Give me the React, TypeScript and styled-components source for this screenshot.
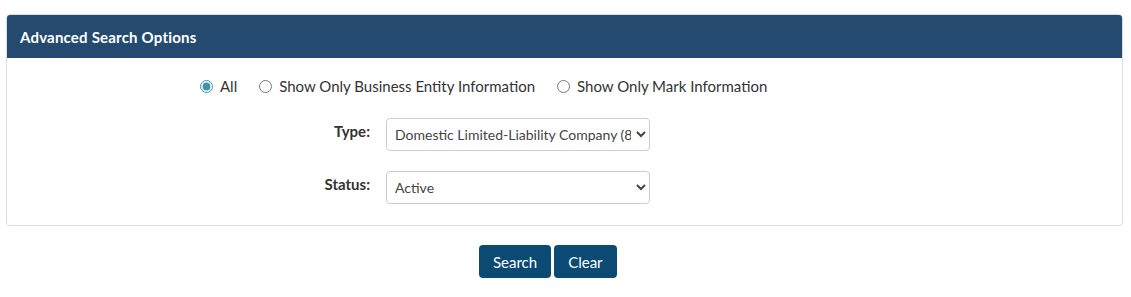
import React from "react";
import styled, { createGlobalStyle } from "styled-components";

const Global = createGlobalStyle`
  html, body { margin: 0; padding: 0; background: #ffffff; }
  body { font-family: Lato, "Liberation Sans", Arial, sans-serif; color: #333333; }
  * { box-sizing: border-box; }
`;

const Page = styled.div`
  padding: 14px 8px 0 6px;
`;

const Panel = styled.section`
  border: 1px solid #dddddd;
  border-radius: 4px;
  background: #ffffff;
  overflow: hidden;
`;

const PanelHeader = styled.div`
  background: #244b6f;
  color: #ffffff;
  height: 43px;
  display: flex;
  align-items: center;
  padding: 0 13px;
  font-weight: 700;
  font-size: 15px;
  letter-spacing: 0.2px;
`;

const PanelBody = styled.div`
  padding: 17px 0 21px 193px;
  display: flex;
  flex-direction: column;
`;

const RadioRow = styled.div`
  display: flex;
  align-items: center;
  height: 22px;
  gap: 22px;
  margin-bottom: 21px;
`;

const RadioLabel = styled.label`
  display: flex;
  align-items: center;
  gap: 7px;
  font-size: 15px;
  color: #333;
  cursor: pointer;
`;

const Radio = styled.input`
  margin: 0;
  width: 13px;
  height: 13px;
  accent-color: #3c93aa;
`;

const FormRow = styled.div<{ $last?: boolean }>`
  display: flex;
  align-items: flex-start;
  gap: 16px;
  margin-bottom: ${(p) => (p.$last ? "0" : "20px")};
`;

const FieldLabel = styled.label`
  width: 170px;
  text-align: right;
  font-weight: 700;
  font-size: 15px;
  padding-top: 4px;
  color: #333;
`;

const Select = styled.select`
  width: 264px;
  height: 33px;
  border: 1px solid #cccccc;
  border-radius: 4px;
  background: #ffffff;
  font-family: Lato, "Liberation Sans", Arial, sans-serif;
  font-size: 14px;
  color: #444;
  padding: 0 2px 0 4px;
`;

const Actions = styled.div`
  display: flex;
  justify-content: flex-start;
  gap: 3px;
  padding: 19px 0 0 473px;
`;

const Button = styled.button`
  height: 33px;
  padding: 0 14px;
  background: #0b4a73;
  color: #ffffff;
  border: none;
  border-radius: 4px;
  font-family: Lato, "Liberation Sans", Arial, sans-serif;
  font-size: 15px;
  cursor: pointer;
`;

export default function App() {
  return (
    <>
      <Global />
      <Page>
        <Panel>
          <PanelHeader>Advanced Search Options</PanelHeader>
          <PanelBody>
            <RadioRow>
              <RadioLabel>
                <Radio type="radio" name="scope" defaultChecked />
                All
              </RadioLabel>
              <RadioLabel>
                <Radio type="radio" name="scope" />
                Show Only Business Entity Information
              </RadioLabel>
              <RadioLabel>
                <Radio type="radio" name="scope" />
                Show Only Mark Information
              </RadioLabel>
            </RadioRow>
            <FormRow>
              <FieldLabel>Type:</FieldLabel>
              <Select defaultValue="llc">
                <option value="llc">Domestic Limited-Liability Company (80)</option>
              </Select>
            </FormRow>
            <FormRow $last>
              <FieldLabel>Status:</FieldLabel>
              <Select defaultValue="active">
                <option value="active">Active</option>
              </Select>
            </FormRow>
          </PanelBody>
        </Panel>
        <Actions>
          <Button>Search</Button>
          <Button>Clear</Button>
        </Actions>
      </Page>
    </>
  );
}
